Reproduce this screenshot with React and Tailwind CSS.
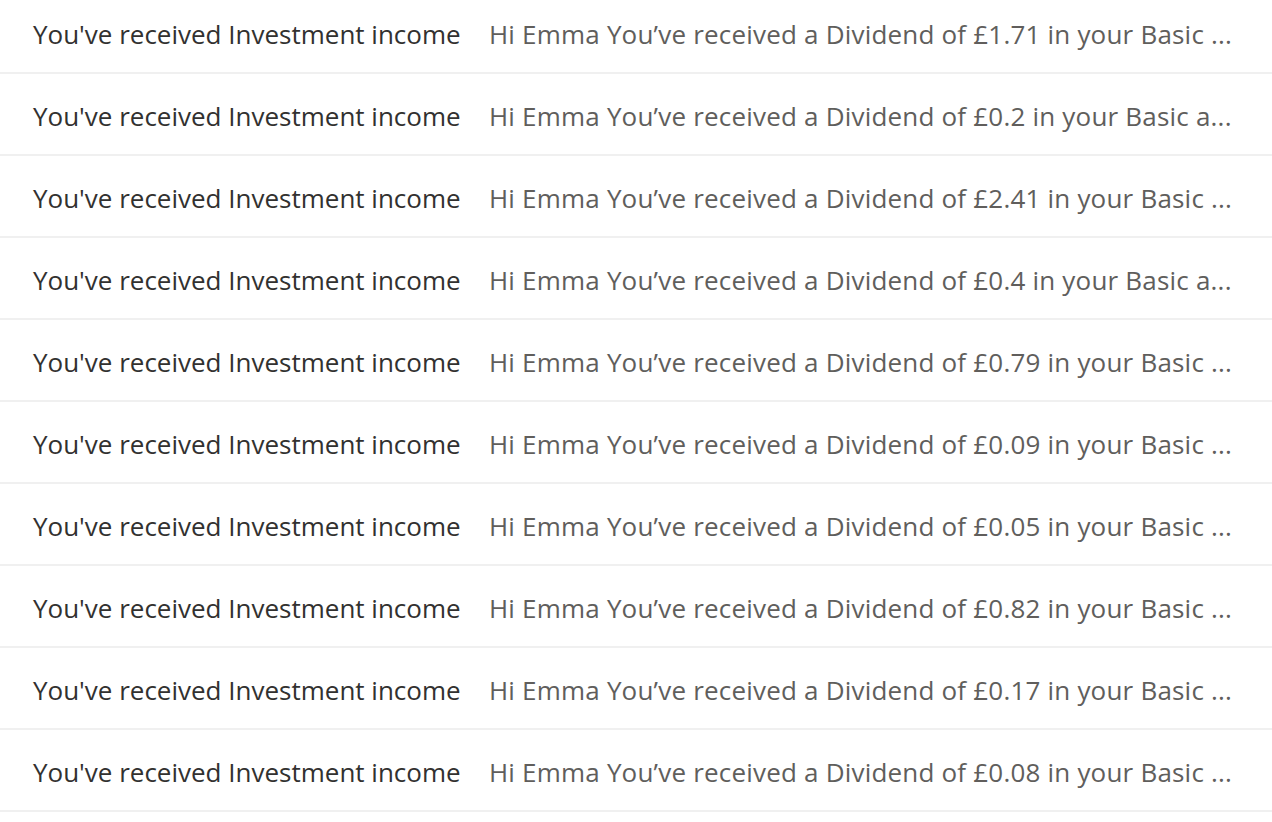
import React from "react";

const rows = [
  "£1.71 in your Basic ...",
  "£0.2 in your Basic a...",
  "£2.41 in your Basic ...",
  "£0.4 in your Basic a...",
  "£0.79 in your Basic ...",
  "£0.09 in your Basic ...",
  "£0.05 in your Basic ...",
  "£0.82 in your Basic ...",
  "£0.17 in your Basic ...",
  "£0.08 in your Basic ...",
];

export default function App() {
  return (
    <div className="h-[822px] overflow-hidden bg-white" style={{ fontFamily: "'Open Sans', 'Noto Sans', sans-serif" }}>
      <div className="-mt-2">
        {rows.map((r, i) => (
          <div key={i} className="flex items-center h-[82px] pt-[4px] border-b-2 border-[#f0f0f0]">
            <div className="w-[489px] shrink-0 pl-[33px] text-[26px] text-[#323130] whitespace-nowrap">You've received Investment income</div>
            <div className="flex-1 min-w-0 text-[26px] tracking-[0.2px] text-[#605e5c] whitespace-nowrap overflow-hidden">
              Hi Emma You’ve received a Dividend of {r}
            </div>
          </div>
        ))}
      </div>
    </div>
  );
}
